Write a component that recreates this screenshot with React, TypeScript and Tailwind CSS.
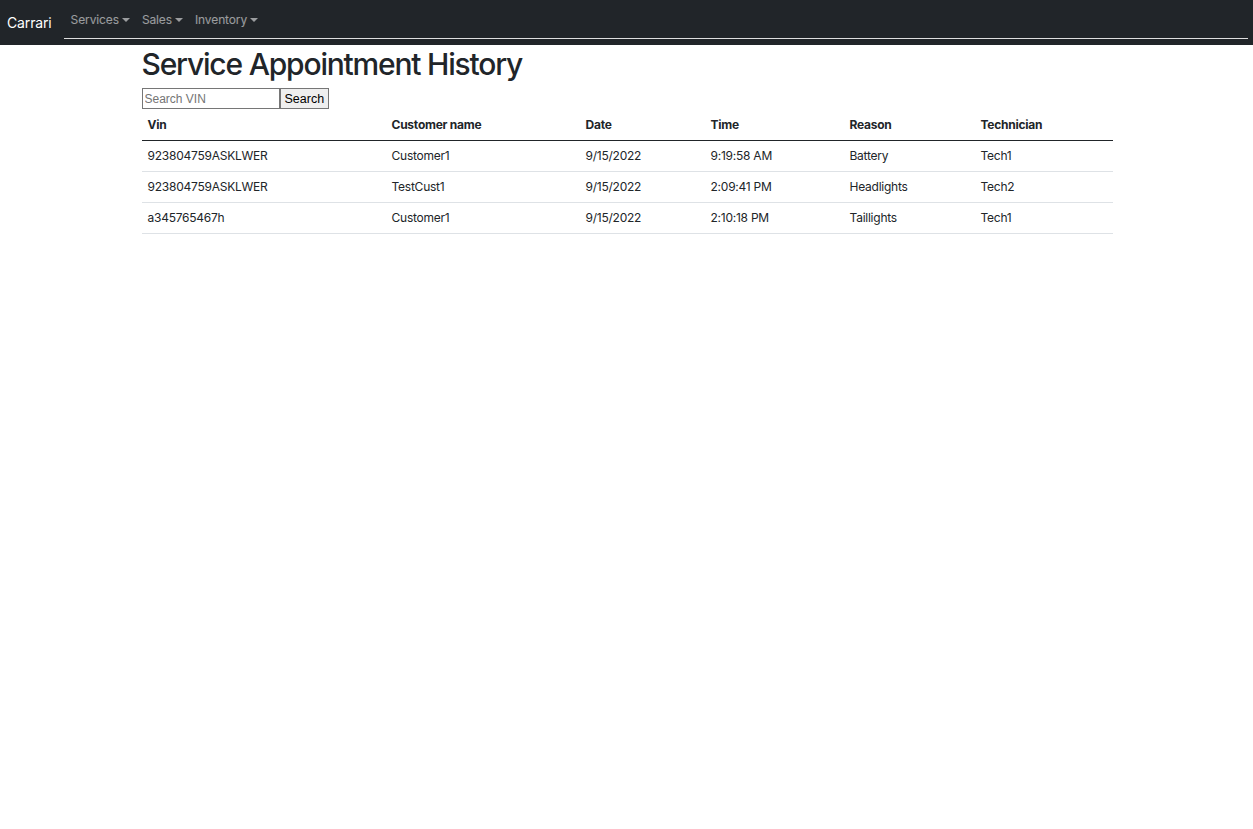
import React from "react";

const rows = [
  { vin: "923804759ASKLWER", customer: "Customer1", date: "9/15/2022", time: "9:19:58 AM", reason: "Battery", tech: "Tech1" },
  { vin: "923804759ASKLWER", customer: "TestCust1", date: "9/15/2022", time: "2:09:41 PM", reason: "Headlights", tech: "Tech2" },
  { vin: "a345765467h", customer: "Customer1", date: "9/15/2022", time: "2:10:18 PM", reason: "Taillights", tech: "Tech1" },
];

function NavItem({ label }: { label: string }) {
  return (
    <span className="flex items-center px-[6px] text-[12px] tracking-[-0.01em] text-white/55">
      {label}
      <span className="ml-[3px] inline-block w-0 h-0 border-x-[4px] border-x-transparent border-t-[4px] border-t-white/55 mt-[1px]" />
    </span>
  );
}

export default function App() {
  return (
    <div className="min-h-screen bg-white font-['Inter','Liberation_Sans',sans-serif] text-[#212529]">
      <nav className="h-[45px] bg-[#212529] flex items-start pl-[7px] pr-[5px]">
        <span className="text-white text-[14px] tracking-[-0.01em] mt-[12px] mr-[12px]">Carrari</span>
        <div className="flex-1 h-[39px] border-b border-[#dedede] flex items-center pl-[1px] pt-[1px]">
          <NavItem label="Services" />
          <NavItem label="Sales" />
          <NavItem label="Inventory" />
        </div>
      </nav>

      <main className="w-[972px] mx-auto pl-[1px]">
        <h1 className="text-[30px] font-medium tracking-[-0.04em] leading-[36px] mt-[1px] mb-[6px]">
          Service Appointment History
        </h1>
        <div className="flex">
          <input
            type="text"
            placeholder="Search VIN"
            className="w-[138px] h-[21px] border border-[#767676] px-[2px] text-[12px] font-['Liberation_Sans',sans-serif] placeholder:text-[#757575] outline-none"
          />
          <button className="h-[21px] px-[4px] pt-[1px] border border-[#767676] bg-[#efefef] text-[12.5px] text-black font-['Liberation_Sans',sans-serif]">
            Search
          </button>
        </div>
        <table className="w-full text-[12px] tracking-[-0.02em] border-collapse table-fixed">
          <colgroup>
            <col className="w-[244px]" />
            <col className="w-[194px]" />
            <col className="w-[125px]" />
            <col className="w-[139px]" />
            <col className="w-[131px]" />
            <col />
          </colgroup>
          <thead>
            <tr className="border-b border-[#212529] h-[31px]">
              {["Vin", "Customer name", "Date", "Time", "Reason", "Technician"].map((h) => (
                <th key={h} className="text-left font-bold px-[6px] pt-[2px] align-middle">
                  {h}
                </th>
              ))}
            </tr>
          </thead>
          <tbody>
            {rows.map((r, i) => (
              <tr key={i} className="border-b border-[#dee2e6] h-[31px]">
                <td className="px-[6px]">{r.vin}</td>
                <td className="px-[6px]">{r.customer}</td>
                <td className="px-[6px]">{r.date}</td>
                <td className="px-[6px]">{r.time}</td>
                <td className="px-[6px]">{r.reason}</td>
                <td className="px-[6px]">{r.tech}</td>
              </tr>
            ))}
          </tbody>
        </table>
      </main>
    </div>
  );
}
